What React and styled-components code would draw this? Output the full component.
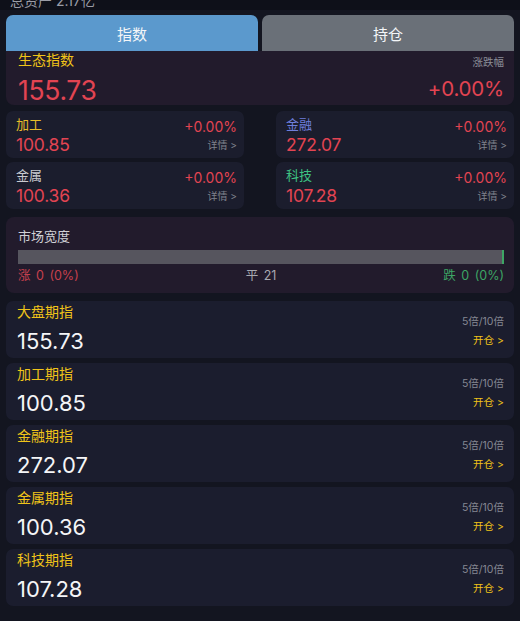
import React from "react";
import styled, { createGlobalStyle } from "styled-components";

const Global = createGlobalStyle`
  html, body { margin: 0; padding: 0; background: #131520; }
  body { font-family: Inter, "Noto Sans CJK SC", sans-serif; -webkit-font-smoothing: antialiased; }
  * { box-sizing: border-box; }
`;

const Page = styled.div`
  width: 520px;
  height: 621px;
  overflow: hidden;
  background: #131520;
  display: flex;
  flex-direction: column;
`;

const Header = styled.div`
  height: 10px;
  background: #0e1019;
  overflow: hidden;
  padding-left: 10px;
`;

const HeaderText = styled.div`
  font-size: 14px;
  line-height: 14px;
  margin-top: -6px;
  color: #9a9ca6;
`;

const Body = styled.div`
  display: flex;
  flex-direction: column;
  padding: 5px 6px 0;
`;

const Tabs = styled.div`
  display: grid;
  grid-template-columns: 1fr 1fr;
  gap: 4px;
`;

const Tab = styled.div`
  height: 36px;
  border-radius: 7px 7px 0 0;
  background: ${(p) => (p.$active ? "#5b99cd" : "#6a7078")};
  color: #f4f6f8;
  font-size: 15px;
  display: flex;
  align-items: center;
  justify-content: center;
`;

const HeroCard = styled.div`
  height: 54px;
  background: #221b2c;
  border-radius: 0 0 8px 8px;
  padding: 1px 10px 0 12px;
  display: flex;
  justify-content: space-between;
  overflow: hidden;
`;

const Col = styled.div`
  display: flex;
  flex-direction: column;
  align-items: ${(p) => (p.$right ? "flex-end" : "flex-start")};
`;

const HeroTitle = styled.div`
  color: #f0c419;
  font-size: 14px;
  line-height: 16px;
`;

const HeroValue = styled.div`
  color: #e24452;
  font-size: 26.5px;
  line-height: 30px;
  margin-top: 7px;
  letter-spacing: -0.3px;
`;

const SmallLabel = styled.div`
  color: #8b8d98;
  font-size: 10.5px;
  line-height: 14px;
  margin-top: 4px;
`;

const HeroPct = styled.div`
  color: #e24452;
  font-size: 20.5px;
  line-height: 26px;
  margin-top: 6px;
  letter-spacing: -0.2px;
`;

const Grid = styled.div`
  display: grid;
  grid-template-columns: 238px 238px;
  justify-content: space-between;
  row-gap: 4px;
  margin-top: 6px;
`;

const MiniCard = styled.div`
  height: 47px;
  background: #1b1d2d;
  border-radius: 7px;
  padding: 5px 7px 0 10px;
  display: flex;
  justify-content: space-between;
`;

const MiniName = styled.div`
  color: ${(p) => p.$color};
  font-size: 13px;
  line-height: 16px;
`;

const MiniValue = styled.div`
  color: #e24452;
  font-size: 17.5px;
  line-height: 20px;
  margin-top: 3px;
  letter-spacing: -0.2px;
`;

const MiniPct = styled.div`
  color: #e24452;
  font-size: 14px;
  line-height: 18px;
  margin-top: 2px;
`;

const Detail = styled.div`
  color: #7f818c;
  font-size: 10px;
  line-height: 14px;
  margin-top: 2px;
`;

const Breadth = styled.div`
  margin-top: 8px;
  height: 76px;
  background: #221b2c;
  border-radius: 8px;
  padding: 10px 10px 0 12px;
  display: flex;
  flex-direction: column;
`;

const BreadthTitle = styled.div`
  color: #d0d1d6;
  font-size: 13px;
  line-height: 18px;
`;

const Bar = styled.div`
  margin-top: 5px;
  height: 14px;
  background: #56555e;
  display: flex;
  justify-content: flex-end;
`;

const BarTick = styled.div`
  width: 2px;
  background: #3da564;
`;

const BreadthRow = styled.div`
  display: grid;
  grid-template-columns: 1fr auto 1fr;
  font-size: 12.5px;
  line-height: 16px;
  margin-top: 4px;
  word-spacing: 2px;
`;

const BreadthItem = styled.div`
  color: ${(p) => p.$color};
  text-align: ${(p) => p.$align};
`;

const FutureList = styled.div`
  display: flex;
  flex-direction: column;
  gap: 5px;
  margin-top: 8px;
`;

const FutureCard = styled.div`
  height: 57px;
  background: #1b1d2e;
  border-radius: 7px;
  padding: 2px 10px 0 11px;
  display: flex;
  justify-content: space-between;
`;

const FutureName = styled.div`
  color: #f0c419;
  font-size: 14px;
  line-height: 18px;
`;

const FutureValue = styled.div`
  color: #f4f5f7;
  font-size: 22px;
  line-height: 28px;
  margin-top: 6px;
`;

const Lever = styled.div`
  color: #858792;
  font-size: 10.5px;
  line-height: 14px;
  margin-top: 12px;
`;

const Open = styled.div`
  color: #f0c419;
  font-size: 10.5px;
  line-height: 14px;
  margin-top: 5px;
`;

const minis = [
  { name: "加工", color: "#e9bd2a", value: "100.85" },
  { name: "金融", color: "#6f7fdc", value: "272.07" },
  { name: "金属", color: "#c9cad0", value: "100.36" },
  { name: "科技", color: "#3ec283", value: "107.28" },
];

const futures = [
  { name: "大盘期指", value: "155.73" },
  { name: "加工期指", value: "100.85" },
  { name: "金融期指", value: "272.07" },
  { name: "金属期指", value: "100.36" },
  { name: "科技期指", value: "107.28" },
];

export default function App() {
  return (
    <Page>
      <Global />
      <Header>
        <HeaderText>总资产 2.17亿</HeaderText>
      </Header>
      <Body>
        <Tabs>
          <Tab $active>指数</Tab>
          <Tab>持仓</Tab>
        </Tabs>
        <HeroCard>
          <Col>
            <HeroTitle>生态指数</HeroTitle>
            <HeroValue>155.73</HeroValue>
          </Col>
          <Col $right>
            <SmallLabel>涨跌幅</SmallLabel>
            <HeroPct>+0.00%</HeroPct>
          </Col>
        </HeroCard>
        <Grid>
          {minis.map((m) => (
            <MiniCard key={m.name}>
              <Col>
                <MiniName $color={m.color}>{m.name}</MiniName>
                <MiniValue>{m.value}</MiniValue>
              </Col>
              <Col $right>
                <MiniPct>+0.00%</MiniPct>
                <Detail>详情 &gt;</Detail>
              </Col>
            </MiniCard>
          ))}
        </Grid>
        <Breadth>
          <BreadthTitle>市场宽度</BreadthTitle>
          <Bar>
            <BarTick />
          </Bar>
          <BreadthRow>
            <BreadthItem $color="#c8404c" $align="left">涨 0 (0%)</BreadthItem>
            <BreadthItem $color="#a8a9b0" $align="center">平 21</BreadthItem>
            <BreadthItem $color="#3da564" $align="right">跌 0 (0%)</BreadthItem>
          </BreadthRow>
        </Breadth>
        <FutureList>
          {futures.map((f) => (
            <FutureCard key={f.name}>
              <Col>
                <FutureName>{f.name}</FutureName>
                <FutureValue>{f.value}</FutureValue>
              </Col>
              <Col $right>
                <Lever>5倍/10倍</Lever>
                <Open>开仓 &gt;</Open>
              </Col>
            </FutureCard>
          ))}
        </FutureList>
      </Body>
    </Page>
  );
}
